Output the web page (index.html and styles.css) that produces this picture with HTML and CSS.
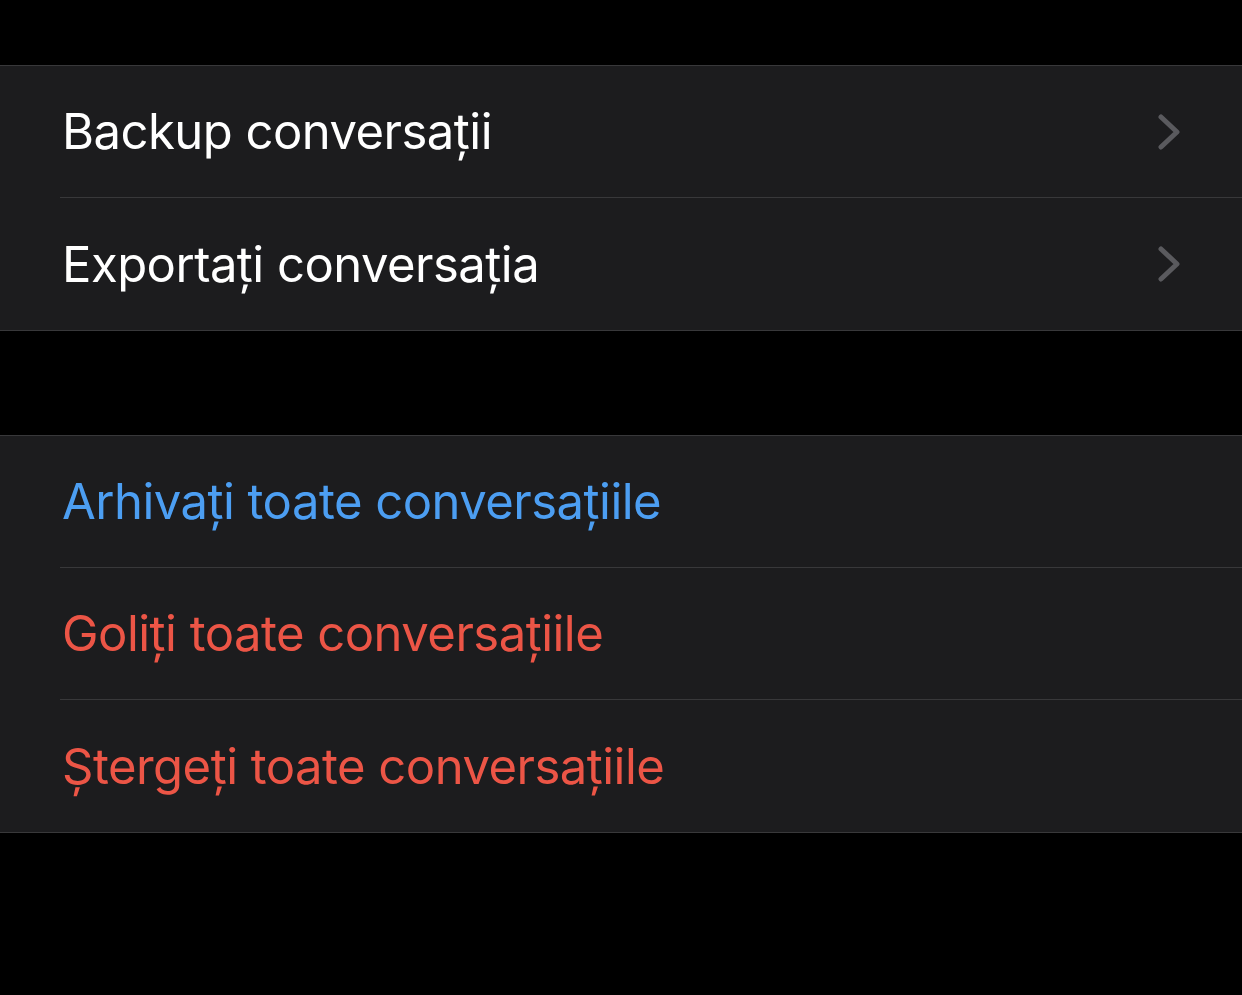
FILE: index.html
```html
<!DOCTYPE html>
<html lang="ro">
<head>
    <meta charset="UTF-8">
    <meta name="viewport" content="width=device-width, initial-scale=1.0">
    <title>Setări conversații</title>
    <link rel="stylesheet" href="styles.css">
</head>
<body>
    <div class="grup">
        <div class="rand">
            <span class="eticheta">Backup conversații</span>
            <svg class="sageata" width="22" height="36" viewBox="0 0 22 36"><path d="M3 3 L19 18 L3 33" fill="none" stroke="#5a5a5e" stroke-width="5" stroke-linecap="round" stroke-linejoin="round"/></svg>
        </div>
        <div class="rand">
            <span class="eticheta">Exportați conversația</span>
            <svg class="sageata" width="22" height="36" viewBox="0 0 22 36"><path d="M3 3 L19 18 L3 33" fill="none" stroke="#5a5a5e" stroke-width="5" stroke-linecap="round" stroke-linejoin="round"/></svg>
        </div>
    </div>

    <div class="grup">
        <div class="rand">
            <span class="eticheta albastru">Arhivați toate conversațiile</span>
        </div>
        <div class="rand">
            <span class="eticheta rosu">Goliți toate conversațiile</span>
        </div>
        <div class="rand">
            <span class="eticheta rosu">Ștergeți toate conversațiile</span>
        </div>
    </div>
</body>
</html>
```

FILE: styles.css
```css
body {
    margin: 0;
    padding-top: 65px;
    background-color: #000;
    font-family: 'Inter', 'Noto Sans', sans-serif;
}
.grup {
    background-color: #1c1c1e;
    border-top: 1px solid #38383a;
    border-bottom: 1px solid #38383a;
    padding-left: 60px;
    margin-bottom: 104px;
}
.rand {
    box-sizing: border-box;
    height: 132px;
    display: flex;
    align-items: center;
    justify-content: space-between;
    padding-right: 62px;
    border-bottom: 1px solid #38383a;
}
.rand:last-child {
    border-bottom: none;
}
.eticheta {
    font-size: 49px;
    color: #fff;
    padding-left: 2px;
    letter-spacing: -0.53px;
}
.albastru {
    color: #4c9ef2;
}
.rosu {
    color: #ec5546;
}
.sageata {
    display: block;
}
```
